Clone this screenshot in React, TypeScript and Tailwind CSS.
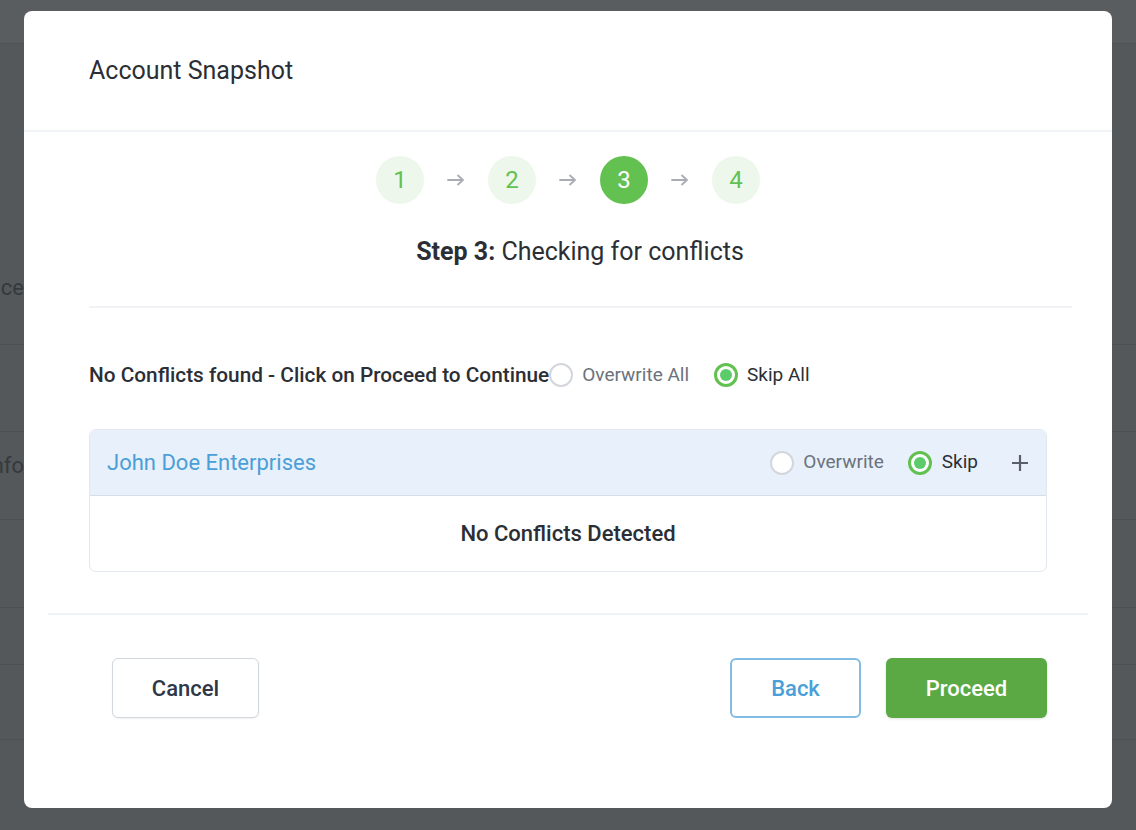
import React from 'react';

function Radio({ checked }: { checked?: boolean }) {
  if (checked) {
    return (
      <span className="flex h-[24px] w-[24px] shrink-0 items-center justify-center rounded-full border-[3px] border-[#62c150] bg-white">
        <span className="h-[12px] w-[12px] rounded-full bg-[#5ccb6a]" />
      </span>
    );
  }
  return <span className="h-[24px] w-[24px] shrink-0 rounded-full border-2 border-[#d3d7dd] bg-white" />;
}

function Arrow() {
  return (
    <svg width="18" height="12" viewBox="0 0 18 12" fill="none" stroke="#a9adb1" strokeWidth="1.8" strokeLinecap="round" strokeLinejoin="round">
      <path d="M1 6h15M11 1.5 16 6l-5 4.5" />
    </svg>
  );
}

const steps = [1, 2, 3, 4];

export default function App() {
  return (
    <div className="relative h-[830px] w-[1136px] overflow-hidden bg-[#54585b] font-['Roboto',sans-serif]">
      {/* dimmed page behind the modal */}
      <div className="flex flex-col">
        <div className="h-[44px] border-b border-[#505356] bg-[#5a5d60]" />
        <div className="h-[226px]" />
        <div className="flex h-[34px] w-[24px] items-center justify-end overflow-hidden">
          <span className="whitespace-nowrap text-[22px] text-[#36393c]">Workspace</span>
        </div>
        <div className="h-[41px] border-b border-[#4d5154]" />
        <div className="h-[87px] border-b border-[#4d5154]" />
        <div className="flex h-[88px] flex-col border-b border-[#4d5154] pt-[18px]">
          <div className="flex w-[24px] justify-end overflow-hidden">
            <span className="whitespace-nowrap text-[22px] leading-[32px] text-[#36393c]">Info</span>
          </div>
        </div>
        <div className="h-[88px] border-b border-[#4d5154]" />
        <div className="h-[57px] border-b border-[#4d5154]" />
        <div className="h-[75px] border-b border-[#4d5154]" />
      </div>

      {/* modal */}
      <div className="absolute inset-0 flex items-start justify-center pt-[11px]">
        <div className="flex h-[797px] w-[1088px] flex-col rounded-[8px] bg-white">
          <div className="flex h-[121px] items-center border-b-2 border-[#f0f4f8] px-[65px]">
            <h2 className="text-[25px] text-[#2b2f35]">Account Snapshot</h2>
          </div>

          <div className="flex items-center justify-center gap-[23px] pt-[24px]">
            {steps.map((s, i) => (
              <React.Fragment key={s}>
                {i > 0 && <Arrow />}
                <div
                  className={
                    s === 3
                      ? 'flex h-[48px] w-[48px] items-center justify-center rounded-full bg-[#63c151] text-[24px] text-white'
                      : 'flex h-[48px] w-[48px] items-center justify-center rounded-full bg-[#eef7ec] text-[24px] text-[#62c150]'
                  }
                >
                  {s}
                </div>
              </React.Fragment>
            ))}
          </div>

          <p className="mt-[32px] pl-[24px] text-center text-[25px] leading-[32px] text-[#2b2f35]">
            <span className="font-bold">Step 3:</span> Checking for conflicts
          </p>

          <div className="ml-[65px] mr-[40px] mt-[38px] h-[2px] bg-[#f0f2f5]" />

          <div className="mt-[54px] flex items-center px-[65px] leading-[26px]">
            <span className="text-[20.8px] font-medium text-[#2b2f35]">No Conflicts found - Click on Proceed to Continue</span>
            <Radio />
            <span className="ml-[9px] text-[19px] text-[#6b727b]">Overwrite All</span>
            <span className="ml-[25px]" />
            <Radio checked />
            <span className="ml-[9px] text-[19px] text-[#2b2f35]">Skip All</span>
          </div>

          <div className="mx-[65px] mt-[41px] overflow-hidden rounded-[7px] border border-[#e3e8ee]">
            <div className="flex h-[66px] items-center border-b border-[#d6dee7] bg-[#e8f0fb] pl-[17px] pr-[16px]">
              <span className="text-[22px] text-[#4a9fd8]">John Doe Enterprises</span>
              <div className="ml-auto flex items-center text-[19px]">
                <Radio />
                <span className="ml-[9px] text-[#6b727b]">Overwrite</span>
                <span className="ml-[24px]" />
                <Radio checked />
                <span className="ml-[10px] text-[#2b2f35]">Skip</span>
                <svg className="ml-[32px]" width="20" height="20" viewBox="0 0 20 20" stroke="#5a6068" strokeWidth="2.2">
                  <path d="M10 2v16M2 10h16" />
                </svg>
              </div>
            </div>
            <div className="flex h-[75px] items-center justify-center">
              <span className="text-[22px] font-medium text-[#2b2f35]">No Conflicts Detected</span>
            </div>
          </div>

          <div className="mx-[24px] mt-[41px] h-[2px] bg-[#f0f3f6]" />

          <div className="mt-[43px] flex items-center pl-[88px] pr-[65px]">
            <button className="h-[60px] w-[147px] rounded-[6px] border border-[#d2d6dd] bg-white text-[22px] font-medium text-[#2d3748] shadow-[0_1px_2px_rgba(0,0,0,0.06)]">
              Cancel
            </button>
            <button className="ml-auto h-[60px] w-[131px] rounded-[6px] border-2 border-[#82bce3] bg-white text-[22px] font-medium text-[#4a9fd8]">
              Back
            </button>
            <button className="ml-[25px] h-[60px] w-[161px] rounded-[6px] bg-[#5aa944] text-[22px] font-medium text-white shadow-[0_1px_3px_rgba(0,0,0,0.12)]">
              Proceed
            </button>
          </div>
        </div>
      </div>
    </div>
  );
}
